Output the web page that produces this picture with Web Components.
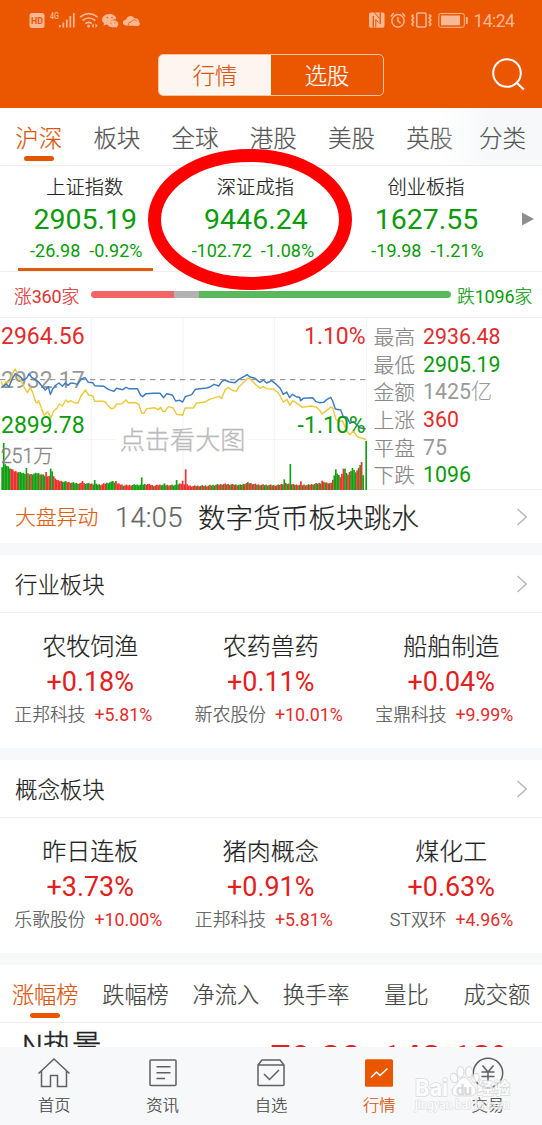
<!DOCTYPE html>
<html lang="zh-CN">
<head>
<meta charset="utf-8">
<title>行情</title>
<style>
html,body{margin:0;padding:0}
body{width:542px;height:1125px;overflow:hidden;background:#fff;font-family:Roboto,"Noto Sans CJK SC",sans-serif;font-weight:300;color:#222;-webkit-text-stroke:.2px}
</style>
</head>
<body>
<quote-app></quote-app>
<script>
const define = (name, html, setup) => customElements.define(name, class extends HTMLElement {
  connectedCallback() {
    if (this.shadowRoot) return;
    const root = this.attachShadow({mode: 'open'});
    const a = k => this.getAttribute(k) || '';
    root.innerHTML = typeof html === 'function' ? html(a) : html;
    if (setup) setup(root, this);
  }
});

define('quote-app', `<style>
:host{display:flex;flex-direction:column;position:relative;width:542px;height:1125px;overflow:hidden}
.cards{display:flex;height:105px;border-bottom:1px solid #eee;align-items:stretch}
.arrow{width:30px;display:flex;align-items:center;justify-content:center;padding-left:2px;box-sizing:border-box}
.data{display:flex;height:172px;flex:none}
.body{flex:1;min-height:0;overflow:hidden;display:flex;flex-direction:column}
highlight-ring{position:absolute;left:148px;top:149px}
water-mark{position:absolute;left:412px;top:1063px}
</style>
<app-header></app-header>
<div class="body">
<market-tabs></market-tabs>
<div class="cards">
<index-card name="上证指数" value="2905.19" change="-26.98" pct="-0.92%" active="1"></index-card>
<index-card name="深证成指" value="9446.24" change="-102.72" pct="-1.08%" wide></index-card>
<index-card name="创业板指" value="1627.55" change="-19.98" pct="-1.21%"></index-card>
<div class="arrow"><svg width="14" height="14" viewBox="0 0 14 14"><path d="M1 .5L13 7L1 13.500z" fill="#8e8e8e"/></svg></div>
</div>
<breadth-bar></breadth-bar>
<div class="data"><minute-chart></minute-chart><market-stats></market-stats></div>
<news-row></news-row>
<sector-block name="行业板块">
<sector-item name="农牧饲渔" value="+0.18%" stock="正邦科技" pct="+5.81%"></sector-item>
<sector-item name="农药兽药" value="+0.11%" stock="新农股份" pct="+10.01%"></sector-item>
<sector-item name="船舶制造" value="+0.04%" stock="宝鼎科技" pct="+9.99%"></sector-item>
</sector-block>
<sector-block name="概念板块">
<sector-item name="昨日连板" value="+3.73%" stock="乐歌股份" pct="+10.00%"></sector-item>
<sector-item name="猪肉概念" value="+0.91%" stock="正邦科技" pct="+5.81%"></sector-item>
<sector-item name="煤化工" value="+0.63%" stock="ST双环" pct="+4.96%"></sector-item>
</sector-block>
<rank-list></rank-list>
</div>
<bottom-nav></bottom-nav>
<highlight-ring></highlight-ring>
<water-mark></water-mark>`);

define('status-bar', `<style>
:host{display:flex;justify-content:space-between;height:40px;color:#f9b894;font-weight:400;-webkit-text-stroke:0}
svg{display:block}
</style>
<svg width="150" height="40" viewBox="0 0 150 40">
<rect x="29.500" y="13" width="15" height="15" rx="2.500" fill="#f9b894"/>
<text x="31" y="24.300" font-size="9.500" font-weight="700" fill="#eb5600" textLength="12" lengthAdjust="spacingAndGlyphs">HD</text>
<text x="50" y="19.300" font-size="9" font-weight="500" fill="#f9b894" textLength="9" lengthAdjust="spacingAndGlyphs">4G</text>
<path d="M59.800 25v2.500M63.300 22.500v5M66.800 19.500v8M70.300 16v11.500M73.800 13v14.500" stroke="#f9b894" stroke-width="1.700"/>
<g fill="none" stroke="#f9b894" stroke-width="1.700"><path d="M80 17.200q8.800-7 17.600 0M82.500 20.500q6.300-5 12.800 0M85.300 23.600q3.500-2.500 6.500 0"/></g>
<circle cx="88.600" cy="26" r="1.500" fill="#f9b894"/><path d="M91.500 25.700l2.200-2.200v4.400zM97.700 25.700l-2.200-2.200v4.400z" fill="#f9b894"/>
<path d="M109.500 13.900c4 0 6.800 2.500 6.800 5.300-4.500-.5-8 2.500-6.900 5.800-1.500 0-2.500-.3-3.200-.5l-2.700 1.300.7-2.300c-4.700-4-.9-9.600 5.300-9.600z" fill="#f9b894"/>
<path d="M113 20.200c3.200 0 5.400 1.900 5.400 3.900 0 .9-.4 1.700-1.300 2.200l.2 1.500-1.700-.9c-5 1-8-.7-8-3 0-2 2.200-3.700 5.400-3.700z" fill="#f9b894"/>
<g fill="#eb5600"><circle cx="107.300" cy="17.500" r=".8"/><circle cx="112" cy="17.500" r=".8"/><circle cx="111" cy="23" r=".6"/><circle cx="115" cy="23" r=".6"/></g>
<path d="M126 25.500c-5-1-3-6.500.2-5.800.8-4 6-5 8.200-1.500 4.500-.5 5 3.500 4.500 3.900 2 1.200.8 3.800-1 3.900z" fill="#f9b894"/><path d="M128.500 25c-.6-2 1-3.200 2.500-2.800 1.300-2.600 4.300-3 6.200-1" fill="none" stroke="#eb5600" stroke-width=".8"/>
</svg>
<svg width="180" height="40" viewBox="362 0 180 40">
<rect x="369" y="12.500" width="15.500" height="15.300" rx="1.800" fill="#f9b894"/><path d="M373.300 16V27.800M380.200 12.500V24" stroke="#eb5600" stroke-width="1.300"/><path d="M375.800 27.800V19.500L378.500 22.600M374.500 12.500L379.500 18.500" stroke="#eb5600" stroke-width="1" fill="none"/>
<g fill="none" stroke="#f9b894" stroke-width="1.500"><circle cx="398" cy="20.800" r="6.200"/><path d="M398 17v4l2.600 2.200M390.800 16.500l3-3.500M405.200 16.500l-3-3.500"/>
<rect x="416.800" y="13" width="9.200" height="14" rx="1.200"/><path d="M413.500 14.500l-1.500 1.600 1.500 2-1.500 2 1.500 2-1.500 2 1.500 2M429.300 14.500l1.500 1.600-1.500 2 1.500 2-1.500 2 1.500 2-1.500 2" stroke-width="1.700"/></g>
<rect x="438.800" y="13.500" width="25.500" height="13.800" rx="2" fill="none" stroke="#f9b894" stroke-width="1"/><rect x="441" y="15.500" width="19" height="9.800" fill="#f9b894"/><path d="M466.800 17v7" stroke="#f9b894" stroke-width="1.800"/>
<text x="473.500" y="26.700" font-size="17.600" fill="#f9b894" textLength="41.500">14:24</text>
</svg>`);

define('app-header', `<style>
:host{display:block;height:108px;background:#eb5600;flex:none}
.row{display:grid;grid-template-columns:158px 226px 158px;height:68px;align-items:center}
.seg{grid-column:2;margin-top:1px;display:grid;grid-template-columns:1fr 1fr;height:42px;box-sizing:border-box;border:1px solid #fbc3a2;border-radius:5px;overflow:hidden;font-size:22.300px;line-height:42px;text-align:center;color:#fff}
.on{background:#fff5f0;color:#d9560c}
svg{justify-self:end;margin-right:15.500px}
.row>svg{grid-column:3}
</style>
<status-bar></status-bar>
<div class="row"><div class="seg"><span class="on">行情</span><span>选股</span></div>
<svg width="36" height="36" viewBox="0 0 36 36" fill="none" stroke="#fff" stroke-width="2"><circle cx="16" cy="17" r="13.800"/><path d="M25.500 26.500l7.300 7" stroke-width="2.300"/></svg></div>`);

define('market-tabs', `<style>
:host{display:flex;height:57px;border-bottom:1px solid #eee;position:relative;flex:none;font-size:23.500px;color:#555}
div{width:47px;margin-right:31.200px;flex:none;line-height:62px;height:57px;display:flex;flex-direction:column;align-items:center;white-space:nowrap}
div:first-of-type{margin-left:15.200px;color:#d9560c}
i{width:30px;height:5px;border-radius:2.500px;background:#e45600;margin-top:-14px;flex:none}
.more{position:absolute;right:0;top:0;width:104px;height:57px;background:linear-gradient(90deg,#f7f8fa00,#f7f8fa 48%);box-sizing:border-box;padding-left:41px;line-height:62px}
</style>
<div>沪深<i></i></div><div>板块</div><div>全球</div><div>港股</div><div>美股</div><div>英股</div><span class="more">分类</span>`);

define('index-card', a => `<style>
:host{display:flex;flex-direction:column;align-items:center;width:170.600px;position:relative;height:105px;white-space:pre}
.n{font-size:19.300px;line-height:28px;margin-top:8px;margin-right:1px;color:#222}
.v{font-size:28.500px;line-height:34px;margin-top:1px;color:#0b9b0b;font-weight:400;-webkit-text-stroke:0}
.s{font-size:18px;line-height:24px;margin-top:2px;padding-left:2px;color:#0b9b0b;font-weight:400;-webkit-text-stroke:0}
:host([wide]) .s{padding:0 6px 0 0}
i{width:135px;height:3px;background:#e05c10;margin-top:5px}
</style><span class="n">${a('name')}</span><span class="v">${a('value')}</span><span class="s">${a('change')}  ${a('pct')}</span>${a('active') ? '<i></i>' : ''}`);

define('breadth-bar', `<style>
:host{display:flex;height:45px;align-items:center;border-bottom:1px solid #f0f0f0;flex:none;font-size:17.800px;letter-spacing:-.15px;white-space:nowrap}
.l{width:76.500px;padding-left:14px;color:#dc3434}.r{color:#0b9b0b;padding-left:6px}
.bar{width:360.500px;height:7px;border-radius:4px;overflow:hidden;display:grid;grid-template-columns:83px 25px 1fr}
.bar i:nth-child(1){background:#f56464}.bar i:nth-child(2){background:#b2b2b2}.bar i:nth-child(3){background:#5bb85b}
b{font-weight:400;font-size:18px;-webkit-text-stroke:0}
</style><span class="l">涨<b>360</b>家</span><span class="bar"><i></i><i></i><i></i></span><span class="r">跌<b>1096</b>家</span>`);

define('minute-chart', `<style>:host{display:block;width:367px;height:172px;flex:none;-webkit-text-stroke:0}svg{display:block}</style>
<svg width="367" height="172" viewBox="0 24 1101 516" fill="none">
<g stroke="#eef0f2" stroke-width="2.500"><path d="M274 24V540M549 24V540M823 24V540M1099 24V540M0 389H348M745 389H1099M0 538H1101"/></g>
<g font-weight="400">
<text x="3" y="235" font-size="69" fill="#999">2932.17</text>
</g>
<path d="M0 209H1098" stroke="#858585" stroke-width="3" stroke-dasharray="16 14"/>
<g stroke-width="4.400" stroke-linejoin="round">
<polyline stroke="#edca3d" points="4,214 9,230 18,215 30,216 38,190 46,177 54,198 64,214 75,236 82,248 91,232 99,250 107,277 112,279 116,272 124,293 132,316 143,305 153,324 161,303 170,296 178,282 187,288 197,270 205,277 213,272 224,279 234,279 243,258 256,240 266,255 278,257 284,274 308,274 316,276 326,289 334,296 342,294 350,282 366,281 378,270 384,278 408,278 417,284 425,310 432,310 440,296 464,293 474,299 482,292 488,304 495,304 505,290 519,294 530,313 548,316 555,294 580,294 590,279 616,276 628,268 645,263 657,259 665,265 676,238 685,233 695,240 709,244 717,230 733,215 742,205 750,206 765,222 780,235 790,230 800,236 820,237 835,249 850,276 861,268 870,286 878,272 900,286 906,292 935,288 950,292 960,302 966,312 975,305 983,299 992,291 998,294 1008,329 1020,334 1027,332 1040,362 1050,374 1060,363 1072,380 1083,384 1098,388"/>
<polyline stroke="#3d7cc0" points="4,233 18,222 27,230 38,204 46,191 60,199 70,211 80,204 87,192 96,203 106,208 116,216 125,228 136,240 145,230 151,253 158,237 168,225 177,219 187,229 196,219 204,226 211,220 222,220 232,223 244,207 255,203 265,217 278,218 284,227 312,229 325,238 342,244 350,235 368,239 378,232 386,236 412,236 422,256 428,260 438,251 460,250 480,250 491,263 500,251 517,255 527,273 539,271 548,276 556,260 575,254 586,238 600,236 620,234 630,231 642,223 656,228 666,214 675,210 688,216 705,218 715,209 733,199 741,194 750,201 765,205 780,217 790,210 800,219 815,212 825,220 840,234 850,253 860,246 869,263 877,253 890,261 899,262 902,272 910,265 938,263 948,275 958,278 971,277 980,269 992,262 998,273 1006,297 1022,300 1030,320 1041,322 1050,340 1060,335 1070,344 1080,353 1097,357"/>
</g>
<g class="vol"></g>
<g font-weight="400">
<text x="3" y="101" font-size="69" fill="#e22c2c">2964.56</text>
<text x="3" y="369" font-size="69" fill="#0b9b0b">2899.78</text>
<text x="1097" y="101" font-size="69" text-anchor="end" fill="#e22c2c">1.10%</text>
<text x="1097" y="369" font-size="69" text-anchor="end" fill="#0b9b0b">-1.10%</text>
</g>
<text x="2" y="459" font-size="59" fill="#858585" stroke="#858585">251万</text>
<text x="359" y="418" font-size="75.500" fill="#bbb" stroke="#bbb">点击看大图</text>
</svg>`, root => {
  // Envelope of volume: x position, bar height.
  const env = [[4,70],[14,76],[22,70],[40,57],[60,52],[90,47],[110,51],[130,44],[160,40],[170,28],[200,24],[230,20],[260,20],[300,16],[330,24],[370,14],[420,16],[440,18],[460,13],[480,16],[520,14],[545,20],[570,12],[620,13],[670,18],[720,15],[740,22],[770,16],[830,14],[850,20],[880,16],[920,15],[970,23],[992,20],[998,38],[1006,54],[1018,38],[1030,60],[1040,45],[1054,64],[1066,52],[1075,72],[1084,82],[1090,6],[1100,6]];
  const spikes = {9:141,77:66,136:54,151:64,155:56,243:27,283:30,334:27,347:27,424:38,490:20,528:30,547:28,556:62,849:32,868:78,901:26,965:28,1006:62,1030:64,1053:66,1082:84,1095:147};
  const runs = [[4,30,'g'],[30,50,'r'],[50,78,'g'],[78,82,'r'],[82,89,'g'],[89,94,'r'],[94,114,'g'],[114,119,'r'],[119,135,'g'],[135,148,'r'],[148,155,'g'],[155,183,'r'],[183,197,'g'],[197,212,'r'],[212,232,'g'],[232,250,'r'],[250,265,'g'],[265,275,'r'],[275,296,'g'],[296,315,'r'],[315,345,'g'],[345,366,'r'],[366,372,'g'],[372,395,'r'],[395,432,'g'],[432,455,'r'],[455,460,'g'],[460,480,'r'],[480,496,'g'],[496,513,'r'],[513,534,'g'],[534,546,'r'],[546,550,'g'],[550,578,'r'],[998,1016,'g'],[1016,1032,'r'],[1032,1041,'g'],[1041,1048,'r'],[1048,1067,'g'],[1067,1075,'r'],[1075,1080,'g'],[1080,1084,'r'],[1084,1101,'g']];
  const near = (x) => { for (const k in spikes) if (Math.abs(x - k) < 2.3) return spikes[k]; return 0; };
  let s = '';
  for (let i = 0; i < 241; i++) {
    const x = 4 + i * 4.55;
    let j = 1; while (j < env.length - 1 && env[j][0] < x) j++;
    const [x0,y0] = env[j-1], [x1,y1] = env[j];
    let h = y0 + (y1 - y0) * Math.min(1, Math.max(0, (x - x0) / (x1 - x0)));
    h += ((i * 7) % 5 - 2) * .9;
    h = Math.max(h, near(x));
    const run = runs.find(r => x >= r[0] && x < r[1]);
    const big = x > 865 && x < 870 || x > 847 && x < 852;
    const c = run ? run[2] : big ? 'g' : ((i * 11) % 17 < 10 ? 'r' : 'g');
    if (x > 1088 && x < 1092) continue;
    s += `<rect x="${x.toFixed(1)}" y="${(540 - h).toFixed(1)}" width="5" height="${h.toFixed(1)}" fill="${c === 'r' ? '#ee3030' : '#12a012'}"/>`;
  }
  root.querySelector('.vol').innerHTML = s;
});

define('market-stats', `<style>
:host{display:grid;grid-template-columns:42px auto;grid-auto-rows:27.700px;column-gap:7.500px;align-content:start;padding:6px 0 0 6.500px;box-sizing:border-box;width:175px;height:172px;border-bottom:1px solid #f0f0f0;font-size:20.800px;line-height:29.700px;color:#888;white-space:nowrap}
b{font-weight:400;font-size:21.300px;line-height:26.500px;-webkit-text-stroke:0}.r{color:#e22c2c}.g{color:#0b9b0b}
.y{color:#999}.y i{font-style:normal;font-weight:300}
</style>
<span>最高</span><b class="r">2936.48</b><span>最低</span><b class="g">2905.19</b><span>金额</span><b class="y">1425<i>亿</i></b><span>上涨</span><b class="r">360</b><span>平盘</span><b class="y">75</b><span>下跌</span><b class="g">1096</b>`);

define('go-chevron', `<style>:host{display:block;width:12px;height:20px}svg{display:block}</style><svg width="12" height="20" viewBox="0 0 12 20"><path d="M1.500 2L10.200 10L1.500 18" fill="none" stroke="#bababa" stroke-width="1.600"/></svg>`);

define('news-row', `<style>
:host{display:flex;height:53px;align-items:center;padding:0 14px 0 15px;border-bottom:12px solid #f7f8fa;flex:none;white-space:nowrap;line-height:53px}
span{position:relative;top:1.500px}
.t{font-size:20.800px;color:#e05c10;width:100px}.c{font-size:27.400px;color:#666;width:83px;letter-spacing:.2px}.m{font-size:27.600px;flex:1}
</style><span class="t">大盘异动</span><span class="c">14:05</span><span class="m">数字货币板块跳水</span><go-chevron></go-chevron>`);

define('sector-block', a => `<style>
:host{display:block;height:193px;border-bottom:12px solid #f7f8fa;flex:none}
.h{display:flex;height:57px;align-items:center;justify-content:space-between;padding:0 14px 0 15px;border-bottom:1px solid #eee;font-size:22.400px;color:#222}
.h span{margin-top:-2px}
.g{display:grid;grid-template-columns:repeat(3,180.500px)}
</style><div class="h"><span>${a('name')}</span><go-chevron></go-chevron></div><div class="g"><slot></slot></div>`);

define('sector-item', a => `<style>
:host{display:flex;flex-direction:column;align-items:center;white-space:nowrap}
.n{font-size:24px;line-height:34px;margin-top:17px}
.v{font-size:26.900px;line-height:34px;margin-top:1px;color:#e22020;font-weight:400;-webkit-text-stroke:0}
.s{align-self:flex-start;display:grid;grid-template-columns:71.500px auto;gap:9px;font-size:17.800px;line-height:26px;margin-top:3px;margin-left:14px;color:#555}
.s span{text-align:right}
b{font-weight:400;color:#e22c2c;-webkit-text-stroke:0}
</style><span class="n">${a('name')}</span><span class="v">${a('value')}</span><span class="s"><span>${a('stock')}</span><b>${a('pct')}</b></span>`);

define('rank-list', `<style>
:host{display:block}
.tabs{display:grid;grid-template-columns:repeat(6,90.330px);height:57px;border-bottom:1px solid #eee;font-size:22.200px;line-height:60px;color:#444;text-align:center;white-space:nowrap}
.on{color:#d9560c;display:flex;flex-direction:column;align-items:center}
i{width:30px;height:5px;border-radius:2.500px;background:#eb5600;margin-top:-12px}
.row{display:flex;justify-content:space-between;height:60px}
.n{font-size:29.300px;line-height:40px;padding:3px 0 0 22px;-webkit-text-stroke:.4px}
.v{font-size:35.500px;line-height:40px;padding:15px 24px 0 0;color:#e22020;font-weight:500;display:flex;gap:20px;-webkit-text-stroke:0}
</style><div class="tabs"><span class="on">涨幅榜<i></i></span><span>跌幅榜</span><span>净流入</span><span>换手率</span><span>量比</span><span>成交额</span></div>
<div class="row"><span class="n">N热景</span><span class="v"><span>79.20</span><span>143.13%</span></span></div>`);

define('bottom-nav', `<style>
:host{display:grid;grid-template-columns:repeat(5,108.400px);height:78px;flex:none;background:#f7f8fa}
</style>
<nav-item label="首页"><svg width="36" height="34" viewBox="0 0 36 34"><path d="M2.500 17.500L18 3L33.500 17.500M5.500 15V30.500H14.500V19.500H21.500V30.500H30.500V15"/></svg></nav-item>
<nav-item label="资讯"><svg width="36" height="34" viewBox="0 0 36 34"><rect x="5" y="4" width="26" height="25.500" rx="1"/><path d="M11.500 10.800H25.500M11.500 16.800H25.500M11.500 22.500H20"/></svg></nav-item>
<nav-item label="自选"><svg width="36" height="34" viewBox="0 0 36 34"><path d="M5 9L9 4H27L31 9V28.500Q31 29.500 30 29.500H6Q5 29.500 5 28.500ZM5 9H31M11 18L16.500 23.500L26 14"/></svg></nav-item>
<nav-item label="行情" on><svg width="36" height="34" viewBox="0 0 36 34"><rect x="4" y="3.300" width="28" height="27.500" rx="1.500" fill="#eb5600" stroke="none"/><path d="M10 21.500L15.500 16L19 19.500L26.500 12.500" stroke="#fff"/></svg></nav-item>
<nav-item label="交易"><svg width="36" height="34" viewBox="0 0 36 34"><circle cx="18" cy="17" r="14.700"/><path d="M12.500 9.500L18 16L23.500 9.500M18 16V26M11.500 16H24.500M11.500 20.500H24.500"/></svg></nav-item>`);

define('nav-item', a => `<style>
:host{display:flex;flex-direction:column;align-items:center;padding-top:9px;color:#444;font-size:16.300px;line-height:26px}
:host([on]){color:#d9560c}
::slotted(svg){display:block;fill:none;stroke:#606060;stroke-width:1.500;margin-bottom:3px}
</style><slot></slot><span>${a('label')}</span>`);

define('highlight-ring', `<style>:host{display:block;width:204px;height:141px}svg{display:block}</style>
<svg width="204" height="141" viewBox="0 0 204 141"><ellipse cx="102" cy="70.500" rx="95.500" ry="64" fill="none" stroke="red" stroke-width="13"/></svg>`);

define('water-mark', `<style>:host{display:block;width:104px;height:52px;-webkit-text-stroke:0}svg{display:block}text{paint-order:stroke;stroke:#d4d4d4;stroke-width:1.500px;fill:#fff}</style>
<svg width="104" height="52" viewBox="0 0 104 52" opacity=".8">
<g fill="#fff" stroke="#d0d0d0" stroke-width="1"><ellipse cx="42" cy="15" rx="3.500" ry="4.800" transform="rotate(-20 42 15)"/><ellipse cx="48.500" cy="9" rx="3.500" ry="5.500"/><ellipse cx="57" cy="9" rx="3.500" ry="5.500"/><ellipse cx="63.500" cy="15" rx="3.500" ry="4.800" transform="rotate(20 63.500 15)"/><path d="M52 14.500c4 0 6 5 9 8 5 5 3 10.500-2 10.500-4 0-10-.5-13 0-6 1-8-6-3-10.500 3-3 5-8 9-8z"/></g>
<text x="3" y="33" font-size="23" font-weight="700" textLength="33" lengthAdjust="spacingAndGlyphs">Bai</text>
<text x="44" y="31.500" font-size="15" font-weight="700" textLength="16" style="fill:#d0d0d0;stroke:none">du</text>
<text x="65" y="31" font-size="16" font-weight="700" textLength="33">经验</text>
<text x="3" y="46" font-size="12" font-weight="500" textLength="95" style="stroke-width:1px">jingyan.baidu.com</text>
</svg>`);
</script>
</body>
</html>
